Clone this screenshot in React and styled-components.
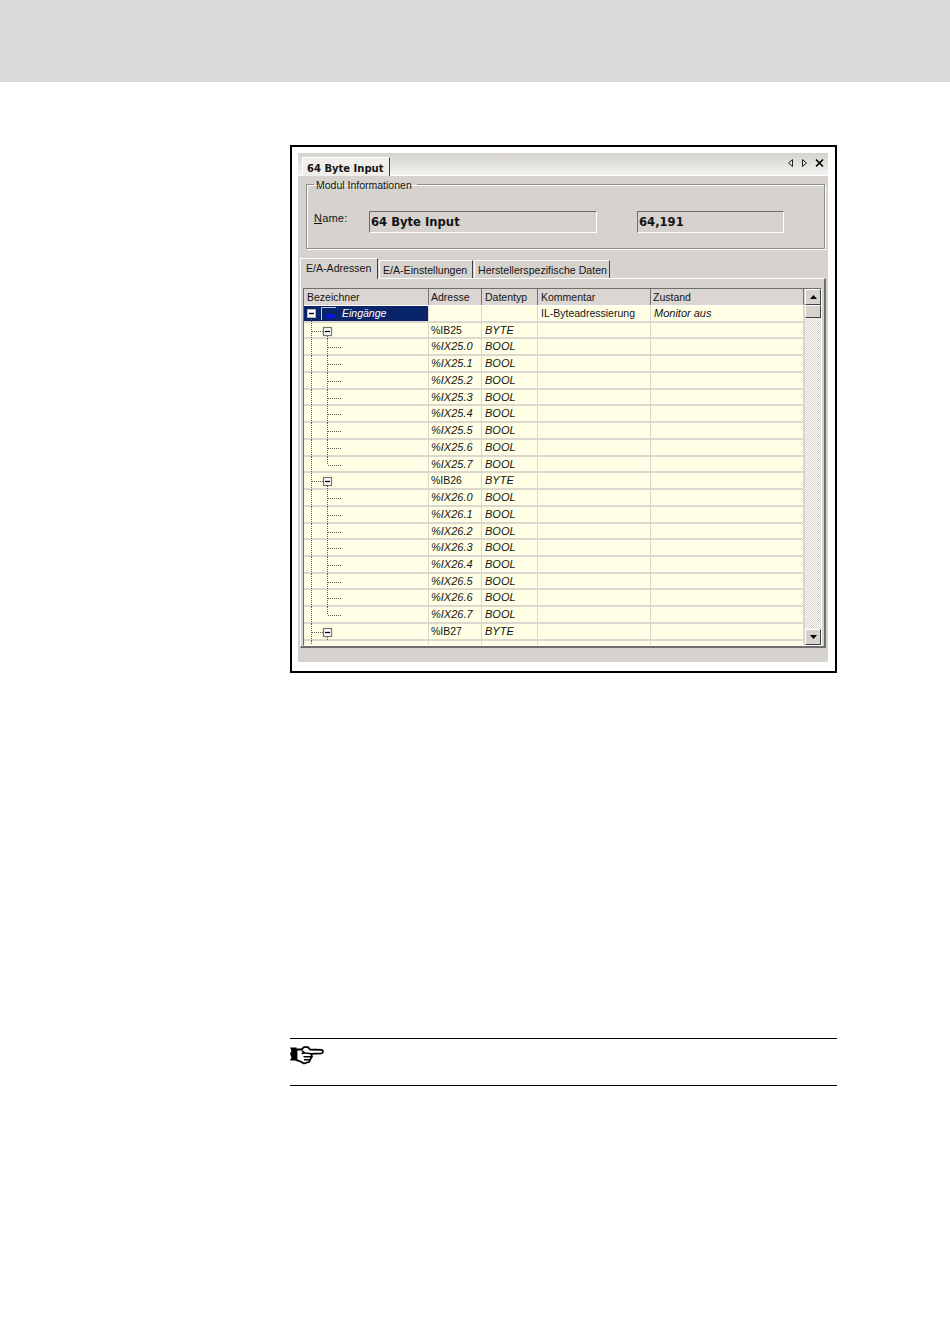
import React from 'react';
import styled, { createGlobalStyle } from 'styled-components';

const GlobalStyle = createGlobalStyle`
  body {
    margin: 0;
    background: #ffffff;
    font-family: "Liberation Sans", Arial, sans-serif;
    color: #141414;
  }
`;

const Page = styled.div`
  width: 950px;
  height: 1344px;
  overflow: hidden;
`;

const TopBand = styled.div`
  height: 82px;
  background: #d9d9d9;
`;

const Figure = styled.div`
  box-sizing: border-box;
  width: 547px;
  height: 528px;
  margin: 63px 0 0 290px;
  border: 2px solid #000000;
  padding: 6px 7px 9px 6px;
`;

const Window = styled.div`
  height: 509px;
  background: #d6d3ce;
  display: flex;
  flex-direction: column;
`;

const TitleBar = styled.div`
  height: 23px;
  box-sizing: border-box;
  padding: 4px 4px 0 4px;
  display: flex;
  justify-content: space-between;
  background: linear-gradient(180deg, #d6d3ce 0%, #e6e5e1 60%, #f3f2f0 100%);
  border-bottom: 1px solid #ffffff;
`;

const DocTab = styled.div`
  box-sizing: border-box;
  width: 88px;
  height: 19px;
  padding: 4px 0 0 4px;
  background: #efeeeb;
  border-top: 1px solid #ffffff;
  border-left: 1px solid #ffffff;
  border-right: 1px solid #404040;
  font-family: "DejaVu Sans", Verdana, sans-serif;
  font-weight: 700;
  font-size: 10px;
  line-height: 13px;
  white-space: nowrap;
`;

const TitleIcons = styled.svg`
  display: block;
  margin-top: 1px;
`;

const GroupBox = styled.fieldset`
  box-sizing: border-box;
  width: 519px;
  height: 73px;
  margin: 0 0 0 8px;
  padding: 0 0 0 7px;
  min-width: 0;
  border: 1px solid #8f8d88;
  box-shadow: inset 1px 1px 0 #ffffff, 1px 1px 0 #ffffff;
  display: flex;
  align-items: flex-start;
`;

const Legend = styled.legend`
  margin-left: 0;
  padding: 3px 5px 0 2px;
  font-size: 10.5px;
  line-height: 13px;
`;

const InfoRow = styled.div`
  display: flex;
  align-items: flex-start;
  padding-top: 19px;
`;

const NameLabel = styled.div`
  width: 55px;
  padding-top: 1px;
  font-size: 11px;
  line-height: 13px;
  letter-spacing: 0.2px;
  u { text-decoration: underline; }
`;

const ReadOnly = styled.div`
  box-sizing: border-box;
  width: ${p => p.$w}px;
  height: 22px;
  margin-right: ${p => p.$gap || 0}px;
  padding: 3px 0 0 1px;
  border-top: 1px solid #6f6d69;
  border-left: 1px solid #6f6d69;
  border-right: 1px solid #ffffff;
  border-bottom: 1px solid #ffffff;
  font-family: "DejaVu Sans", Verdana, sans-serif;
  font-weight: 700;
  font-size: 11.6px;
  line-height: 15px;
  white-space: nowrap;
`;

const TabStrip = styled.div`
  display: flex;
  align-items: flex-end;
  gap: 1px;
  height: 20px;
  margin: 9px 0 0 2px;
`;

const Tab = styled.div`
  box-sizing: border-box;
  width: ${p => p.$w}px;
  height: ${p => (p.$active ? 21 : 18)}px;
  padding: ${p => (p.$active ? '3px 0 0 5px' : '3px 0 0 3px')};
  margin-bottom: ${p => (p.$active ? -1 : 0)}px;
  background: #d6d3ce;
  border-top: 1px solid #ffffff;
  border-left: 1px solid #ffffff;
  border-right: 1px solid #404040;
  font-size: 10.6px;
  line-height: 13px;
  white-space: nowrap;
  position: relative;
`;

const TabPanel = styled.div`
  box-sizing: border-box;
  width: 526px;
  height: 370px;
  margin-left: 2px;
  padding: 9px 2px 0 2px;
  border-top: 1px solid #ffffff;
  border-left: 1px solid #ffffff;
  border-right: 2px solid #6f6d69;
  border-bottom: 2px solid #6f6d69;
`;

const Grid = styled.div`
  height: 356px;
  display: flex;
  border-top: 1px solid #6f6d69;
  border-left: 1px solid #6f6d69;
  border-right: 1px solid #ffffff;
  border-bottom: 1px solid #ffffff;
  overflow: hidden;
`;

const Table = styled.div`
  width: 500px;
  overflow: hidden;
  background: #dcd8d0;
`;

const HeadRow = styled.div`
  display: flex;
  height: 16px;
  background: linear-gradient(180deg, #d9d5d1, #dcd6d2);
  border-bottom: 1px solid #ffffff;
`;

const HeadCell = styled.div`
  box-sizing: border-box;
  width: ${p => p.$w}px;
  padding-left: ${p => p.$pad ?? 3}px;
  border-right: 1px solid #77746f;
  font-size: 10.5px;
  line-height: 16px;
  white-space: nowrap;
  overflow: hidden;
`;

const Row = styled.div`
  display: flex;
  height: 16.74px;
`;

const Cell = styled.div`
  box-sizing: border-box;
  width: ${p => p.$w}px;
  height: 14.7px;
  margin-right: 1px;
  padding-left: ${p => p.$pad ?? 3}px;
  background: #ffffe6;
  font-size: ${p => (p.$italic ? 11 : 10.5)}px;
  line-height: 15px;
  font-style: ${p => (p.$italic ? 'italic' : 'normal')};
  white-space: nowrap;
  overflow: hidden;
`;

const TreeCell = styled.div`
  position: relative;
  flex: none;
  width: 124px;
  height: 14.7px;
  margin-right: 1px;
  background: ${p => (p.$selected ? '#0a246a' : '#ffffe6')};
`;

const TreeArt = styled.svg`
  position: absolute;
  left: 0;
  top: 0;
  overflow: visible;
`;

const RootLabel = styled.span`
  position: absolute;
  left: 38px;
  top: 0;
  color: #ffffff;
  font-size: 10.5px;
  line-height: 15px;
  font-style: italic;
`;

const ScrollBar = styled.div`
  width: 16px;
  margin-left: 1px;
  display: flex;
  flex-direction: column;
`;

const ScrollButton = styled.div`
  box-sizing: border-box;
  height: ${p => p.$h || 16}px;
  background: #d6d3ce;
  border-top: 1px solid #ffffff;
  border-left: 1px solid #ffffff;
  border-right: 1px solid #404040;
  border-bottom: 1px solid #404040;
  display: flex;
  align-items: center;
  justify-content: center;
`;

const ScrollTrack = styled.div`
  flex: 1;
  background-color: #ffffff;
  background-image: repeating-conic-gradient(#d6d3ce 0 25%, #ffffff 0 50%);
  background-size: 2px 2px;
`;

const Note = styled.div`
  box-sizing: border-box;
  width: 547px;
  height: 48px;
  margin: 365px 0 0 290px;
  padding-top: 7px;
  border-top: 1px solid #000000;
  border-bottom: 1px solid #000000;
`;

const widths = [124, 52, 55, 112, 152];

const Dot = '#5f5d59';

// tree connectors for the first column, one svg per row
const TreeLines = ({ kind, last }) => (
  <TreeArt width="123" height="17">
    <line x1="7.5" x2="7.5" y1={kind === 'root' ? 13 : 0} y2="17" stroke={Dot} strokeDasharray="1 1" />
    {kind === 'root' && (
      <g>
        <rect x="3.5" y="3.5" width="8" height="8" fill="#ffffff" stroke="#b8b6b2" />
        <line x1="5" x2="10" y1="7.5" y2="7.5" stroke="#000000" strokeWidth="1.4" />
        <path d="M17.500 14V1.500H32" fill="none" stroke="#c4cce0" />
        <path d="M21.500 2v4" stroke="#1010ff" />
        <path d="M25 9h7v2.500h-7v2l-3.500-3.200L25 7z" fill="#1010ff" />
      </g>
    )}
    {kind === 'group' && (
      <g>
        <line x1="8" x2="19" y1="8.5" y2="8.5" stroke={Dot} strokeDasharray="1 1" />
        <rect x="19.500" y="4.500" width="8" height="8" fill="#ffffff" stroke="#77746f" strokeWidth="1.200" />
        <line x1="21" x2="26" y1="8.500" y2="8.500" stroke="#000000" strokeWidth="1.300" />
        <line x1="23.500" x2="23.500" y1="13" y2="17" stroke={Dot} strokeDasharray="1 1" />
      </g>
    )}
    {kind === 'leaf' && (
      <g>
        <line x1="23.5" x2="23.5" y1="0" y2={last ? 8 : 17} stroke={Dot} strokeDasharray="1 1" />
        <line x1="24" x2="38" y1="8.5" y2="8.5" stroke={Dot} strokeDasharray="1 1" />
      </g>
    )}
  </TreeArt>
);

const HandIcon = () => (
  <svg width="34" height="19" viewBox="0 0 34 19" style={{ display: 'block' }}>
    <path d="M0 1.500h6.500v13H0l1.500-3.200L0 8l1.500-3.200z" fill="#000000" />
    <path
      d="M6.500 3.500h5L14 1.200h4l2 2.300 11.500.3c2 .3 2 3.200 0 3.500L21 7.800l1 2.700-1.500 2.500-1.500 3-5 1.500-3.500-2-4-1.300z"
      fill="#ffffff"
      stroke="#000000"
      strokeWidth="1.800"
      strokeLinejoin="round"
    />
    <path d="M11.500 7.500c3-1.200 6-.5 9.500.3M13.500 10.800H22M14 13.800h6.500M12 4.500l3 2.500" fill="none" stroke="#000000" strokeWidth="1.600" />
  </svg>
);

const buildRows = () => {
  const rows = [];
  const leaves = n => {
    for (let i = 0; i <= 7; i++) {
      rows.push({ kind: 'leaf', last: i === 7, addr: `%IX${n}.${i}`, type: 'BOOL' });
    }
  };
  rows.push({ kind: 'group', addr: '%IB25', type: 'BYTE' });
  leaves(25);
  rows.push({ kind: 'group', addr: '%IB26', type: 'BYTE' });
  leaves(26);
  rows.push({ kind: 'group', addr: '%IB27', type: 'BYTE' });
  rows.push({ kind: 'cut', addr: '', type: '' });
  return rows;
};

const App = () => (
  <Page>
    <GlobalStyle />
    <TopBand />
    <Figure>
      <Window>
        <TitleBar>
          <DocTab>64 Byte Input</DocTab>
          <TitleIcons width="38" height="10" viewBox="0 0 38 10">
            <path d="M6.500 1.500v7l-4-3.500z" fill="none" stroke="#202020" />
            <path d="M16.500 1.500v7l4-3.500z" fill="none" stroke="#202020" />
            <path d="M30 1.500l7 7M37 1.500l-7 7" stroke="#000000" strokeWidth="1.600" />
          </TitleIcons>
        </TitleBar>
        <GroupBox>
          <Legend>Modul Informationen</Legend>
          <InfoRow>
            <NameLabel><u>N</u>ame:</NameLabel>
            <ReadOnly $w={228} $gap={40}>64 Byte Input</ReadOnly>
            <ReadOnly $w={147}>64,191</ReadOnly>
          </InfoRow>
        </GroupBox>
        <TabStrip>
          <Tab $w={78} $active>E/A-Adressen</Tab>
          <Tab $w={94}>E/A-Einstellungen</Tab>
          <Tab $w={136}>Herstellerspezifische Daten</Tab>
        </TabStrip>
        <TabPanel>
          <Grid>
            <Table>
              <HeadRow>
                <HeadCell $w={125}>Bezeichner</HeadCell>
                <HeadCell $w={53} $pad={2}>Adresse</HeadCell>
                <HeadCell $w={56}>Datentyp</HeadCell>
                <HeadCell $w={113}>Kommentar</HeadCell>
                <HeadCell $w={153} $pad={2}>Zustand</HeadCell>
              </HeadRow>
              <Row>
                <TreeCell $selected>
                  <TreeLines kind="root" />
                  <RootLabel>Eingänge</RootLabel>
                </TreeCell>
                <Cell $w={widths[1]} />
                <Cell $w={widths[2]} />
                <Cell $w={widths[3]}>IL-Byteadressierung</Cell>
                <Cell $w={widths[4]} $italic>Monitor aus</Cell>
              </Row>
              {buildRows().map((r, i) => (
                <Row key={i}>
                  <TreeCell>
                    <TreeLines kind={r.kind} last={r.last} />
                  </TreeCell>
                  <Cell $w={widths[1]} $pad={2} $italic={r.kind === 'leaf'}>{r.addr}</Cell>
                  <Cell $w={widths[2]} $italic>{r.type}</Cell>
                  <Cell $w={widths[3]} />
                  <Cell $w={widths[4]} />
                </Row>
              ))}
            </Table>
            <ScrollBar>
              <ScrollButton>
                <svg width="7" height="4" viewBox="0 0 7 4"><path d="M3.500 0l3.500 4H0z" fill="#000000" /></svg>
              </ScrollButton>
              <ScrollButton $h={13} />
              <ScrollTrack />
              <ScrollButton>
                <svg width="7" height="4" viewBox="0 0 7 4"><path d="M0 0h7L3.500 4z" fill="#000000" /></svg>
              </ScrollButton>
            </ScrollBar>
          </Grid>
        </TabPanel>
      </Window>
    </Figure>
    <Note>
      <HandIcon />
    </Note>
  </Page>
);

export default App;
